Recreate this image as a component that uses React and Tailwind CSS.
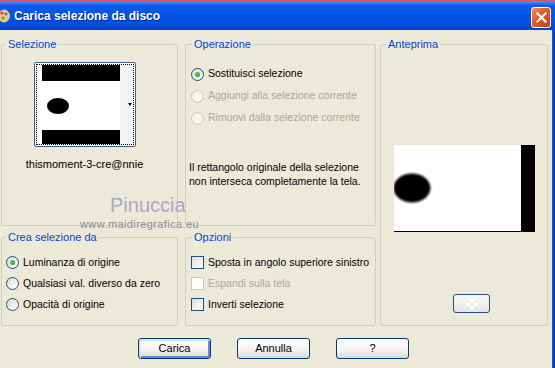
const Radio = ({ checked, disabled }) => (
    <span
        className={`w-[13px] h-[13px] shrink-0 rounded-full border flex items-center justify-center ${
            disabled
                ? 'border-[#cac8bb] bg-[#f5f4ea]'
                : 'border-[#1c5180] bg-[linear-gradient(135deg,#dcdcd7,#ffffff)]'
        }`}
    >
        {checked && <span className="w-[5px] h-[5px] rounded-full bg-[radial-gradient(circle_at_40%_40%,#55d455,#1c9a1c)]" />}
    </span>
);

const Check = ({ disabled }) => (
    <span
        className={`w-[13px] h-[13px] shrink-0 border ${
            disabled
                ? 'border-[#cac8bb] bg-[#ffffff]'
                : 'border-[#1c5180] bg-[linear-gradient(135deg,#dcdcd7,#ffffff)]'
        }`}
    />
);

const Legend = ({ children, ml }) => (
    <legend className={`${ml} px-[2px] leading-[13px] text-[11px] text-[#0046d5]`}>{children}</legend>
);

const Button = ({ children, def }) => (
    <button
        className={`w-[73px] h-[21px] rounded-[3px] border border-[#003c74] bg-[linear-gradient(to_bottom,#ffffff,#f3f2ee_60%,#dcd8cc)] text-[11px] leading-none text-black ${
            def ? 'shadow-[inset_1px_1px_0_1px_#cee7ff,inset_-1px_-1px_0_1px_#6982ee]' : ''
        }`}
    >
        {children}
    </button>
);

const TitleBar = () => (
    <div className="h-[30px] flex flex-col shrink-0">
        <div className="h-[2px] bg-[#d9546c]" />
        <div className="flex-1 flex items-center bg-[linear-gradient(to_bottom,#3d8ef6_0%,#0b5ce8_12%,#0054e3_50%,#0050dd_80%,#0043c8_100%)]">
            <svg width="12" height="16" viewBox="0 0 12 16">
                <ellipse cx="4" cy="8" rx="6" ry="6.5" fill="#f2c48a" />
                <circle cx="2" cy="5" r="1.6" fill="#e23c2c" />
                <circle cx="6" cy="6" r="1.5" fill="#2c7ae2" />
                <circle cx="3" cy="10" r="1.5" fill="#3cab3c" />
                <path d="M8 3 L11 1" stroke="#7a4a1a" strokeWidth="1.5" />
            </svg>
            <span className="ml-[2px] text-white font-bold text-[12px] [text-shadow:1px_1px_0_#0a2a8a]">
                Carica selezione da disco
            </span>
            <div className="ml-auto mr-[4px] mt-[2px] w-[20px] h-[21px] rounded-[3px] border border-white bg-[linear-gradient(135deg,#f0906a,#e0582c_45%,#c8401c)] flex items-center justify-center">
                <svg width="11" height="11" viewBox="0 0 11 11">
                    <path d="M1.5 1.5 L9.5 9.5 M9.5 1.5 L1.5 9.5" stroke="#fff" strokeWidth="2.2" strokeLinecap="square" />
                </svg>
            </div>
        </div>
    </div>
);

export default function App() {
    return (
        <div className="w-[555px] h-[368px] overflow-hidden bg-[#ece9d8] font-['Liberation_Sans',Arial,sans-serif] text-[10.5px] text-black flex flex-col">
            <TitleBar />
            <div className="flex flex-1">
                <div className="flex-1 relative pt-[8px]">
                    <div className="flex pl-[1px]">
                        {/* left column */}
                        <div className="w-[177px] flex flex-col gap-[5px]">
                            <fieldset className="h-[188px] border border-[#d0d0bf] rounded-[3px]">
                                <Legend ml="ml-[4px]">Selezione</Legend>
                                <div className="w-[165px] flex flex-col items-center">
                                    <div className="mt-[11px] w-[102px] h-[85px] border border-[#3c5f86] rounded-[2px] p-[1px] bg-white">
                                        <div className="w-full h-full border border-dotted border-black">
                                            <svg width="96" height="79" viewBox="0 0 96 79" className="block">
                                                <defs>
                                                    <filter id="sb" x="-20%" y="-20%" width="140%" height="140%">
                                                        <feGaussianBlur stdDeviation="0.7" />
                                                    </filter>
                                                </defs>
                                                <rect width="96" height="79" fill="#fff" />
                                                <rect x="83" width="13" height="79" fill="#f3f3f3" />
                                                <rect x="5" y="0" width="78" height="16" fill="#000" />
                                                <rect x="5" y="65" width="78" height="14" fill="#000" />
                                                <ellipse cx="21" cy="41" rx="11" ry="8" fill="#000" filter="url(#sb)" />
                                                <path d="M91 38 L95 38 L93 41 Z" fill="#000" />
                                            </svg>
                                        </div>
                                    </div>
                                    <div className="mt-[11px] leading-[13px] text-[11px]">thismoment-3-cre@nnie</div>
                                </div>
                            </fieldset>
                            <fieldset className="h-[95px] border border-[#d0d0bf] rounded-[3px]">
                                <Legend ml="ml-[4px]">Crea selezione da</Legend>
                                <div className="pl-[4px] pt-[8px] flex flex-col">
                                    {[
                                        { label: 'Luminanza di origine', checked: true },
                                        { label: 'Qualsiasi val. diverso da zero' },
                                        { label: 'Opacità di origine' },
                                    ].map((r, i) => (
                                        <div key={i} className="h-[21px] flex items-center gap-[4px] whitespace-nowrap">
                                            <Radio checked={r.checked} />
                                            <span>{r.label}</span>
                                        </div>
                                    ))}
                                </div>
                            </fieldset>
                        </div>

                        {/* middle column */}
                        <div className="w-[191px] ml-[7px] flex flex-col gap-[5px]">
                            <fieldset className="h-[188px] border border-[#d0d0bf] rounded-[3px]">
                                <Legend ml="ml-[6px]">Operazione</Legend>
                                <div className="pl-[5px] pt-[12px] flex flex-col">
                                    {[
                                        { label: 'Sostituisci selezione', checked: true },
                                        { label: 'Aggiungi alla selezione corrente', disabled: true },
                                        { label: 'Rimuovi dalla selezione corrente', disabled: true },
                                    ].map((r, i) => (
                                        <div key={i} className="h-[22px] flex items-center gap-[4px] whitespace-nowrap">
                                            <Radio checked={r.checked} disabled={r.disabled} />
                                            <span className={r.disabled ? 'text-[#aca899]' : ''}>{r.label}</span>
                                        </div>
                                    ))}
                                </div>
                                <p className="pl-[3px] mt-[31px] leading-[14px] whitespace-nowrap">
                                    Il rettangolo originale della selezione
                                    <br />
                                    non interseca completamente la tela.
                                </p>
                            </fieldset>
                            <fieldset className="h-[95px] border border-[#d0d0bf] rounded-[3px]">
                                <Legend ml="ml-[6px]">Opzioni</Legend>
                                <div className="pl-[5px] pt-[8px] flex flex-col">
                                    {[
                                        { label: 'Sposta in angolo superiore sinistro' },
                                        { label: 'Espandi sulla tela', disabled: true },
                                        { label: 'Inverti selezione' },
                                    ].map((c, i) => (
                                        <div key={i} className="h-[21px] flex items-center gap-[4px] whitespace-nowrap">
                                            <Check disabled={c.disabled} />
                                            <span className={c.disabled ? 'text-[#aca899]' : ''}>{c.label}</span>
                                        </div>
                                    ))}
                                </div>
                            </fieldset>
                        </div>

                        {/* right column */}
                        <div className="w-[168px] ml-[4px]">
                            <fieldset className="h-[288px] border border-[#d0d0bf] rounded-[3px]">
                                <Legend ml="ml-[5px]">Anteprima</Legend>
                                <div className="flex flex-col">
                                    <div className="mt-[94px] flex justify-center">
                                        <svg width="141" height="87" viewBox="0 0 141 87" className="block">
                                            <defs>
                                                <filter id="pb" x="-30%" y="-30%" width="160%" height="160%">
                                                    <feGaussianBlur stdDeviation="1.1" />
                                                </filter>
                                            </defs>
                                            <rect width="141" height="87" fill="#fff" />
                                            <ellipse cx="18" cy="43" rx="18.5" ry="14.5" fill="#000" filter="url(#pb)" />
                                            <rect x="127" width="14" height="87" fill="#000" />
                                            <rect y="86" width="141" height="1" fill="#000" />
                                        </svg>
                                    </div>
                                    <button className="mt-[62px] ml-[72px] w-[37px] h-[19px] rounded-[3px] border border-[#1f4f86] bg-[linear-gradient(to_bottom,#f7f7f4,#e6e5df)] flex items-center justify-center">
                                        <svg width="14" height="10" viewBox="0 0 14 10">
                                            <rect x="5" y="0" width="4" height="3" fill="#ffffff" />
                                            <rect x="1" y="4" width="4" height="3" fill="#ffffff" />
                                            <rect x="9" y="4" width="4" height="3" fill="#ffffff" />
                                            <rect x="5" y="7" width="4" height="3" fill="#ffffff" />
                                        </svg>
                                    </button>
                                </div>
                            </fieldset>
                        </div>
                    </div>

                    <div className="flex gap-[26px] pl-[138px] mt-[12px]">
                        <Button def>Carica</Button>
                        <Button>Annulla</Button>
                        <Button>?</Button>
                    </div>

                    {/* watermark */}
                    <div className="absolute left-[110px] top-[165px] text-[20px] leading-none text-[#a9a9c6] pointer-events-none">
                        Pinuccia
                    </div>
                    <div className="absolute left-[80px] top-[189px] text-[11px] leading-none tracking-[0.4px] text-[#8c8c9c] pointer-events-none">
                        www.maidiregrafica.eu
                    </div>
                </div>
                <div className="w-[3px] bg-[linear-gradient(to_right,#1a64ec,#0a40c8,#0836b0)]" />
            </div>
        </div>
    );
}
